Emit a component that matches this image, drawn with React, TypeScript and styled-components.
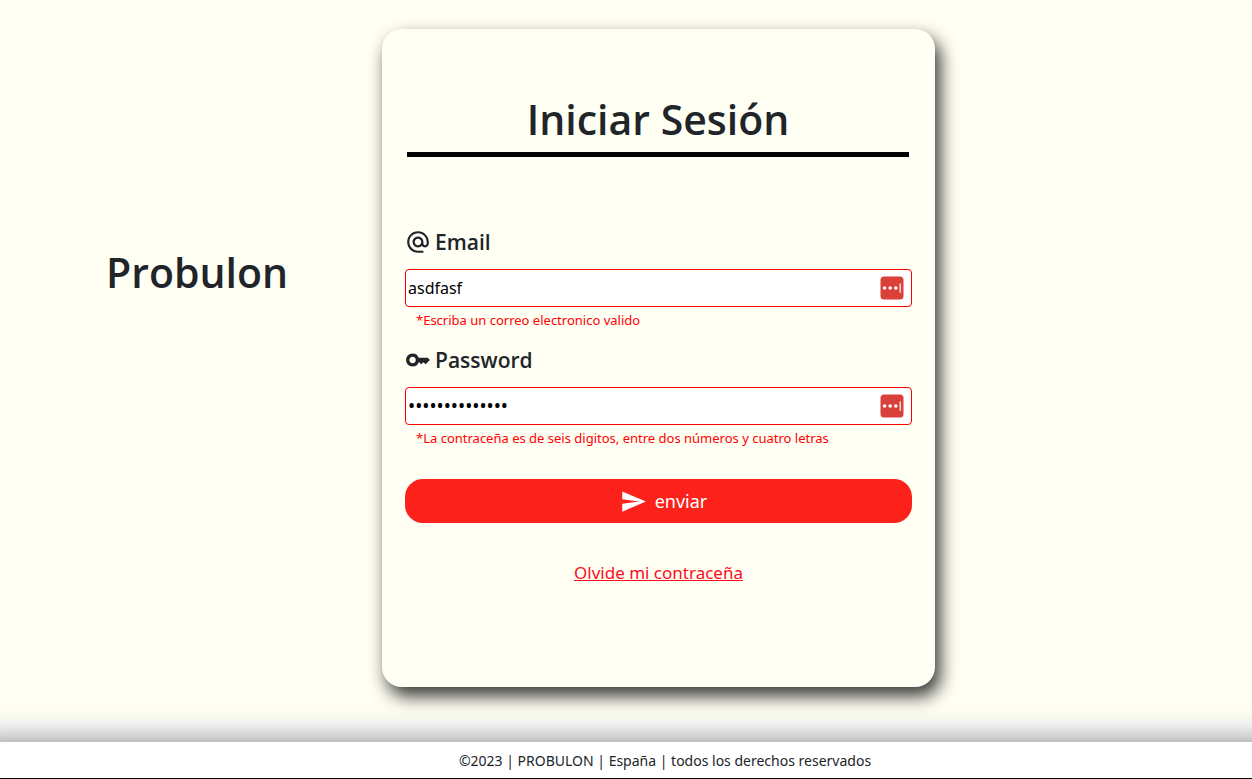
import React from "react";
import styled, { createGlobalStyle } from "styled-components";
import { MdAlternateEmail, MdKey, MdSend } from "react-icons/md";

const GlobalStyle = createGlobalStyle`
  *, *::before, *::after { box-sizing: border-box; }
  body {
    margin: 0;
    background: #fff;
    color: #212529;
    font-family: "Segoe UI", "Noto Sans", "Open Sans", sans-serif;
    font-size: 16px;
    line-height: 24px;
  }
`;

const Page = styled.div`
  min-height: 100vh;
  display: flex;
  flex-direction: column;
`;

const Main = styled.main`
  flex: 1;
  display: grid;
  grid-template-columns: 382fr 553fr 317fr;
  align-items: start;
  padding: 29px 0 32px;
  margin-bottom: 23px;
  background: #fffff4;
`;

const Title = styled.h1`
  margin: 0;
  font-family: "Segoe UI", "Open Sans", sans-serif;
  font-size: 41px;
  line-height: 54px;
  font-weight: 600;
  text-align: center;
`;

const Brand = styled(Title)`
  padding: 216px 0 0 12px;
`;

const Card = styled.section`
  padding: 63px 23px 102px;
  border-radius: 20px;
  background: #fffff4;
  box-shadow: 5px 9px 18px rgba(0, 0, 0, 0.8);
`;

const CardHeader = styled.header`
  margin: 0 3px 0 2px;
  padding-bottom: 6px;
  border-bottom: 5px solid #000;
`;

const Form = styled.form`
  display: flex;
  flex-direction: column;
  padding-top: 70px;
`;

const Field = styled.div`
  display: flex;
  flex-direction: column;
  margin-bottom: 15px;
`;

const Label = styled.label`
  display: flex;
  align-items: center;
  gap: 4px;
  margin-bottom: 12px;
  font-family: "Segoe UI", "Open Sans", sans-serif;
  font-size: 21px;
  line-height: 30px;
  font-weight: 600;
`;

const InputBox = styled.div`
  display: flex;
  align-items: center;
  height: 38px;
  padding: 0 7px 0 2px;
  border: 1px solid #f00;
  border-radius: 4px;
  background: #fff;
`;

const Input = styled.input`
  flex: 1;
  min-width: 0;
  padding: 0;
  border: 0;
  outline: 0;
  background: transparent;
  color: #000;
  font: inherit;
  font-size: ${({ type }) => (type === "password" ? 19 : 16)}px;
`;

const FillButton = styled.button`
  display: flex;
  padding: 0;
  border: 0;
  background: none;
`;

const ErrorText = styled.p`
  margin: 0;
  padding: 3px 11px 0;
  color: #f00;
  font-size: 13px;
  line-height: 20px;
`;

const Submit = styled.button`
  display: flex;
  align-items: center;
  justify-content: center;
  gap: 8px;
  height: 44px;
  margin: 16px 0 38px;
  padding: 0 3px 0 13px;
  border: 0;
  border-radius: 18px;
  background: #fc221b;
  color: #fff;
  font: inherit;
  font-size: 18px;
`;

const Forgot = styled.a`
  align-self: center;
  color: #fc0d1b;
  font-size: 17px;
`;

const Footer = styled.footer`
  padding: 7px 0 5px 78px;
  border-bottom: 1px solid #000;
  background: #fff;
  box-shadow: 0 30px 32px 30px rgba(33, 37, 41, 0.58);
  font-size: 14px;
  text-align: center;
`;

const FillIcon = () => (
  <svg width="24" height="24" viewBox="0 0 24 24" aria-hidden="true">
    <rect x="0.5" y="0.5" width="23" height="23" rx="3.5" fill="#d9403a" />
    <circle cx="4.6" cy="12" r="1.8" fill="#fff" />
    <circle cx="10.2" cy="12" r="1.8" fill="#fff" />
    <circle cx="15.8" cy="12" r="1.8" fill="#fff" />
    <rect x="19.6" y="7.2" width="1.2" height="9.6" rx="0.6" fill="#fff" />
  </svg>
);

type FieldProps = {
  id: string;
  type: string;
  label: string;
  value: string;
  error: string;
  icon: React.ReactNode;
};

const FormField = ({ id, type, label, value, error, icon }: FieldProps) => (
  <Field>
    <Label htmlFor={id}>
      {icon}
      {label}
    </Label>
    <InputBox>
      <Input id={id} type={type} defaultValue={value} aria-describedby={`${id}-error`} />
      <FillButton type="button" aria-label={`Autocompletar ${label}`}>
        <FillIcon />
      </FillButton>
    </InputBox>
    <ErrorText id={`${id}-error`}>{error}</ErrorText>
  </Field>
);

export default function App() {
  return (
    <>
      <GlobalStyle />
      <Page>
        <Main>
          <Brand>Probulon</Brand>
          <Card>
            <CardHeader>
              <Title as="h2">Iniciar Sesión</Title>
            </CardHeader>
            <Form onSubmit={(e) => e.preventDefault()}>
              <FormField
                id="email"
                type="text"
                label="Email"
                value="asdfasf"
                error="*Escriba un correo electronico valido"
                icon={<MdAlternateEmail size={26} />}
              />
              <FormField
                id="password"
                type="password"
                label="Password"
                value="contrasena1234"
                error="*La contraceña es de seis digitos, entre dos números y cuatro letras"
                icon={<MdKey size={26} />}
              />
              <Submit type="submit">
                <MdSend size={27} />
                enviar
              </Submit>
              <Forgot href="#">Olvide mi contraceña</Forgot>
            </Form>
          </Card>
        </Main>
        <Footer>©2023 | PROBULON | España | todos los derechos reservados</Footer>
      </Page>
    </>
  );
}
